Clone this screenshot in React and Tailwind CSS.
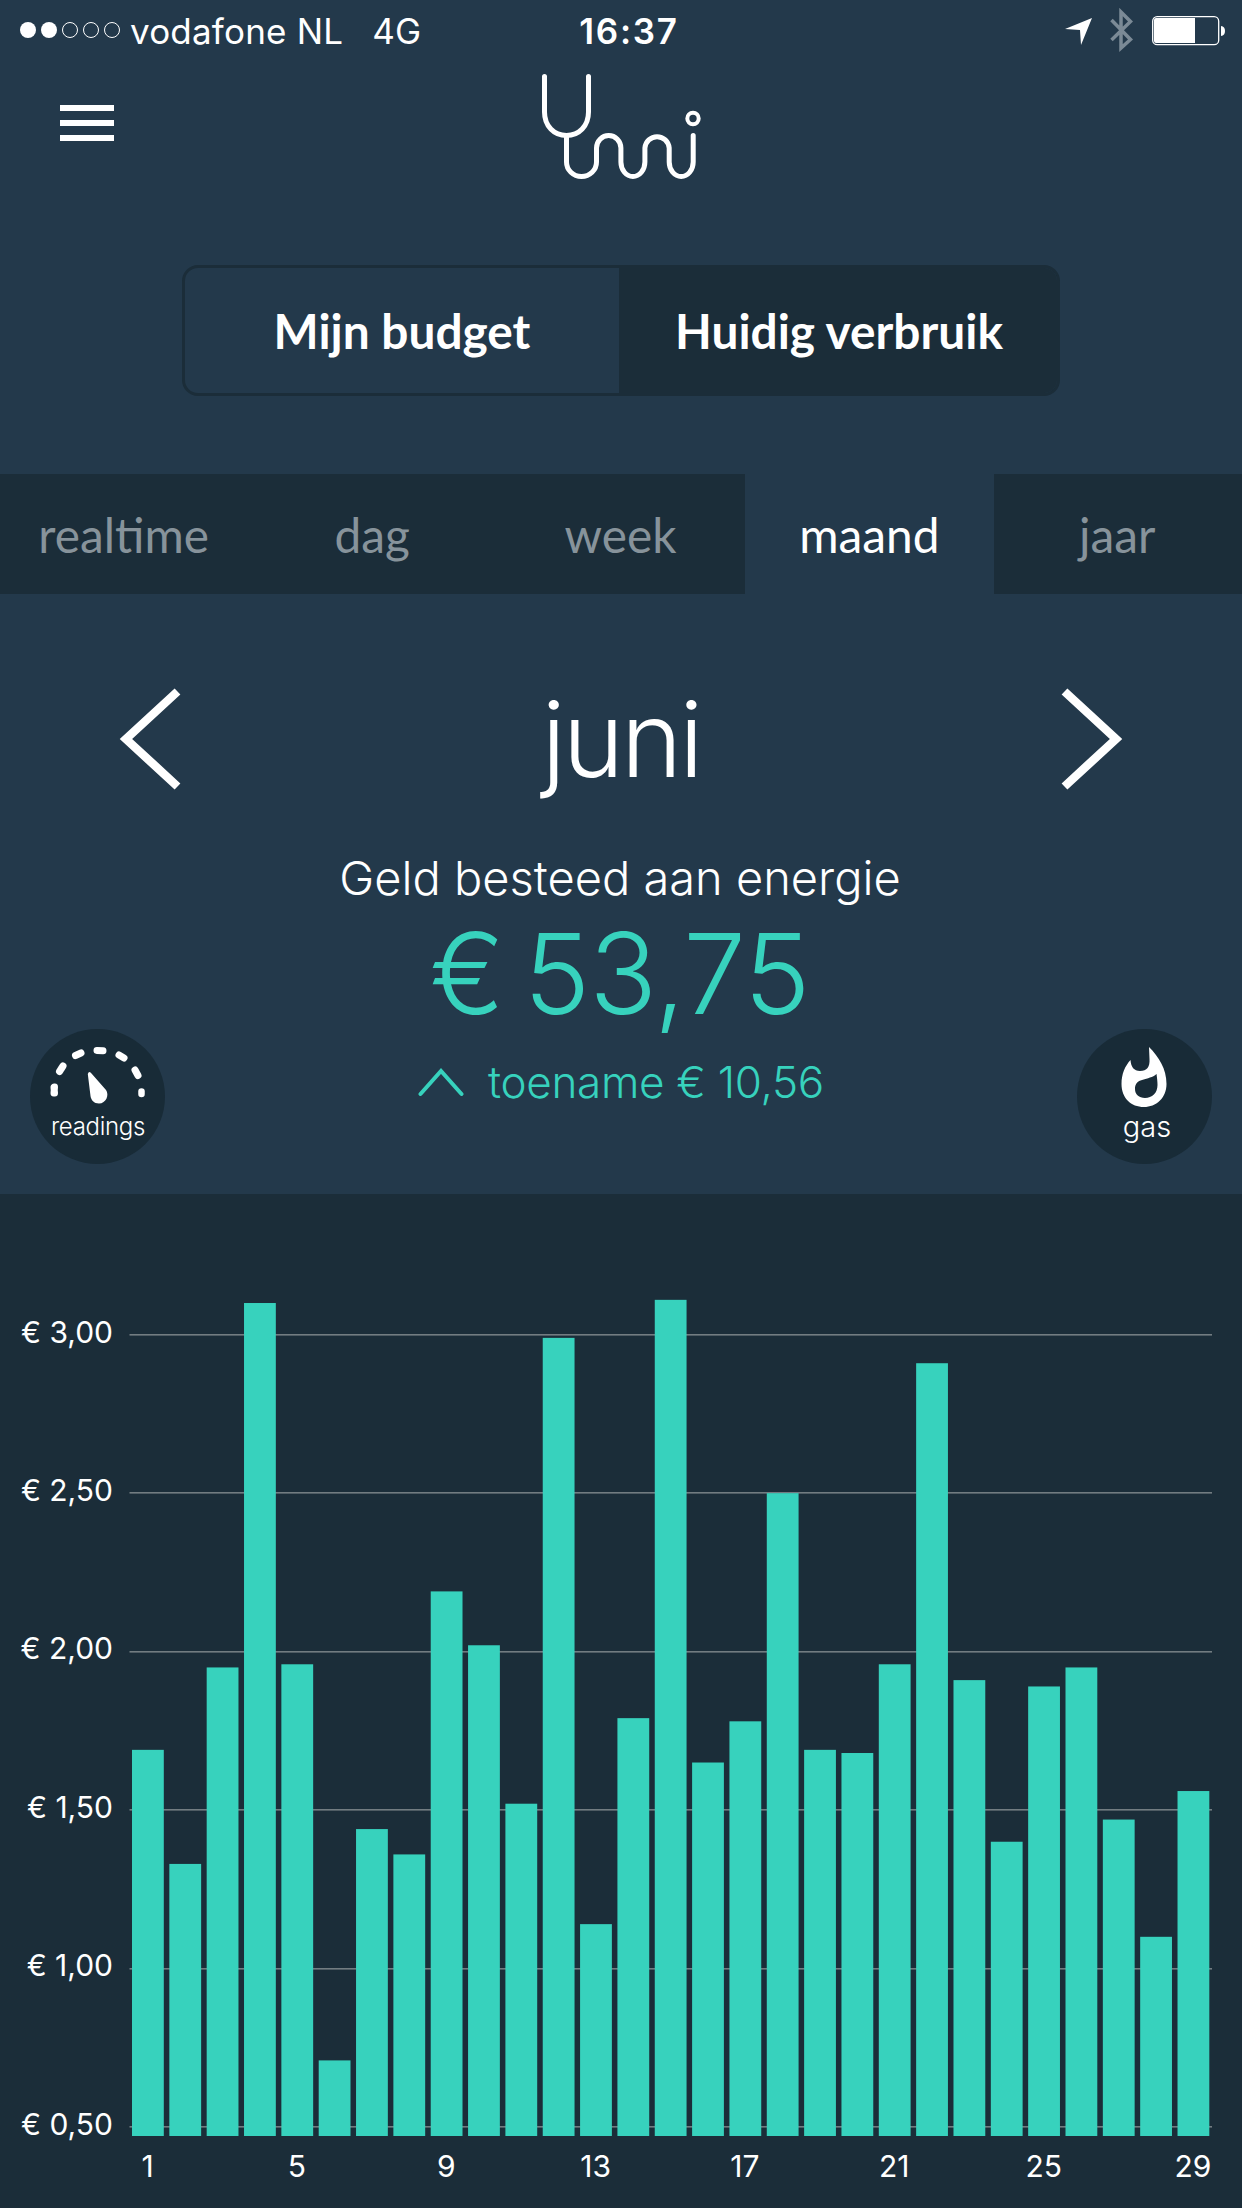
const periods = ['realtime', 'dag', 'week', 'maand', 'jaar'];

const usage = [
  1.69, 1.33, 1.95, 3.1, 1.96, 0.71, 1.44, 1.36, 2.19, 2.02, 1.52, 2.99, 1.14, 1.79, 3.11,
  1.65, 1.78, 2.5, 1.69, 1.68, 1.96, 2.91, 1.91, 1.4, 1.89, 1.95, 1.47, 1.1, 1.56,
];

const ticks = [3, 2.5, 2, 1.5, 1, 0.5];

const StatusBar = () => (
  <div className="grid h-[60px] grid-cols-3 items-center pl-[19px] pr-[17px] font-['Inter'] text-[35px] leading-[58px]">
    <div className="flex items-center">
      <svg width="104" height="20" viewBox="0 0 104 20" className="mr-[7px] shrink-0">
        {[9, 30, 51, 72, 93].map((cx, i) => (
          <circle
            key={cx}
            cx={cx}
            cy="10"
            r={i < 2 ? 8 : 7.5}
            fill={i < 2 ? 'white' : 'none'}
            stroke="white"
            strokeWidth={i < 2 ? 0 : 1}
          />
        ))}
      </svg>
      <span className="whitespace-nowrap pt-[2px] tracking-[0.2px]">vodafone NL</span>
      <span className="ml-[29px] pt-[2px]">4G</span>
    </div>
    <div className="pl-[14px] pt-[2px] text-center font-semibold tracking-[1.7px]">16:37</div>
    <div className="flex items-center justify-end">
      <svg width="160" height="44" viewBox="0 0 160 44">
        <path d="M0 21 L27 10 L16 37 L15 22 Z" fill="white" />
        <path
          d="M46.500 12 L65.500 31.500 L56 40 V4 L65.500 13.500 L46.500 32"
          fill="none"
          stroke="#7b8a96"
          strokeWidth="3.500"
        />
        <rect x="87.700" y="8.700" width="66" height="28" rx="4.500" fill="none" stroke="white" strokeWidth="1.300" />
        <path d="M91 10 H130 V35 H91 Q89 35 89 33 V12 Q89 10 91 10 Z" fill="white" />
        <path d="M156 18 Q160 18.500 160 23 Q160 27.500 156 28 Z" fill="white" />
      </svg>
    </div>
  </div>
);

const Logo = () => (
  <svg width="162" height="112" viewBox="0 0 162 112" fill="none" stroke="white" strokeWidth="5" strokeLinecap="round">
    <path d="M4.500 6.500 V42 C4.500 56 14 65.500 26.500 65.500 C39 65.500 48.500 56 48.500 42 V6.500" />
    <path d="M26.500 65.500 V92 A15 14.500 0 0 0 56.500 92 V78 A12.200 12.500 0 0 1 80.900 78 V92 A12 14.500 0 0 0 104.900 92 V78 A12.200 12.500 0 0 1 129.200 78 V92 A12 14.500 0 0 0 153.200 92 V65.500" />
    <circle cx="153" cy="48.500" r="5.700" strokeWidth="4" />
  </svg>
);

const Header = () => (
  <div className="grid h-[205px] grid-cols-3 items-start px-[60px]">
    <button type="button" className="mt-[45px] flex w-[54px] flex-col gap-[9px]">
      <span className="h-[6px] bg-white" />
      <span className="h-[6px] bg-white" />
      <span className="h-[6px] bg-white" />
    </button>
    <div className="mt-[10px] flex justify-center">
      <Logo />
    </div>
  </div>
);

const ModeSwitch = () => (
  <div className="mx-auto flex h-[131px] w-[878px] overflow-hidden rounded-[16px] border-[3px] border-[#1b2d39] text-center text-[47.800px] font-bold leading-[126px]">
    <div className="w-[434px]">Mijn budget</div>
    <div className="flex-1 bg-[#1b2d39] pl-[2px]">Huidig verbruik</div>
  </div>
);

const PeriodTabs = ({ active }) => (
  <div className="mt-[78px] grid h-[120px] grid-cols-5 text-center text-[47.800px]">
    {periods.map((period) => (
      <div
        key={period}
        className={
          period === active
            ? 'h-[120px] leading-[122px] text-white'
            : 'h-[120px] bg-[#1b2d39] pr-[1px] leading-[122px] text-[#87939b]'
        }
      >
        {period}
      </div>
    ))}
  </div>
);

const MonthPicker = () => (
  <div className="mt-[80px] flex h-[130px] items-center justify-between px-[119px]">
    <svg width="62" height="102" viewBox="0 0 62 102" fill="none" stroke="white" strokeWidth="8.500">
      <path d="M58.500 3.500 L7 51 L58.500 98.500" />
    </svg>
    <span className="font-['Inter'] text-[104px] font-light leading-[130px] tracking-[-3px]">juni</span>
    <svg width="62" height="102" viewBox="0 0 62 102" fill="none" stroke="white" strokeWidth="8.500">
      <path d="M3.500 3.500 L55 51 L3.500 98.500" />
    </svg>
  </div>
);

const GaugeIcon = () => (
  <svg width="96" height="58" viewBox="0 0 96 58" fill="none" stroke="white" strokeWidth="7" strokeLinecap="round">
    <path d="M5 41.500 L5.500 47 M5.500 41 L5 47" />
    <path d="M10.500 25.500 L14 20" />
    <path d="M26.500 9.500 L32 7" />
    <path d="M48 4.500 L54 4.800" />
    <path d="M70 9 L75 12" />
    <path d="M86 24 L89 29.500" />
    <path d="M92.500 45.500 V48" strokeWidth="6.500" />
    <path
      d="M39.500 26.500 C40.500 25.500 41.500 26 42.500 27.500 L57 44 C60.500 49 57 57.500 50 57.500 C45 57.500 42 54 41.500 50 L38.800 28 Z"
      fill="white"
      stroke="none"
    />
  </svg>
);

const FlameIcon = () => (
  <svg width="46" height="60" viewBox="0 0 46 60">
    <path
      d="M28 0 C38 10 45.500 22 45.500 37 C45.500 51 35 60 23 60 C10 60 0.500 51 0.500 37 C0.500 27 4 19 9.500 13 C10 20 13 24 19 24 C26 24 29 20 28.500 12 Z M35.500 27 C28 34 14 30 14 42 C14 47.500 18 51 24 51 C31 51 36.500 46 36.500 38 C36.500 34 36 31 35.500 27 Z"
      fill="white"
      fillRule="evenodd"
    />
  </svg>
);

const Summary = () => (
  <div className="h-[390px] font-['Inter'] font-light">
    <div className="mt-[34px] h-[80px] pr-[2px] text-center text-[47px] leading-[80px]">Geld besteed aan energie</div>
    <div className="h-[111px] pr-[3px] text-center text-[112px] leading-[111px] tracking-[-0.800px] text-[#37d2bd] [word-spacing:-11px]">
      € 53,75
    </div>
    <div className="flex items-start justify-between px-[30px]">
      <div className="flex size-[135px] flex-col items-center rounded-full bg-[#182b37]">
        <div className="mt-[17px] pr-[1px]">
          <GaugeIcon />
        </div>
        <span className="mt-[10px] pl-[1px] text-[24px] leading-[26px] tracking-[-0.300px]">readings</span>
      </div>
      <div className="mt-[23px] flex items-center text-[44px] leading-[60px] tracking-[-0.300px] text-[#37d2bd]">
        <svg width="46" height="30" viewBox="0 0 46 30" className="mr-[24px]" fill="none" stroke="#37d2bd" strokeWidth="4" strokeLinecap="round">
          <path d="M2.500 27 L23 4 L43.500 27" />
        </svg>
        <span>toename € 10,56</span>
      </div>
      <div className="flex size-[135px] flex-col items-center rounded-full bg-[#182b37]">
        <div className="mt-[18px]">
          <FlameIcon />
        </div>
        <span className="mt-[4px] pl-[5px] text-[29px] leading-[32px]">gas</span>
      </div>
    </div>
  </div>
);

const CHART_TOP = 140.7;
const EURO = 316.9;
const BASE = 942;

const yFor = (value) => CHART_TOP + (3 - value) * EURO;

const UsageChart = () => (
  <svg width="1242" height="1014" viewBox="0 0 1242 1014" className="block bg-[#1b2d39] font-['Inter'] text-[30px]" fill="white">
    {ticks.map((tick) => (
      <g key={tick}>
        <rect x="129.500" y={Math.round(yFor(tick)) - 1} width="1082.500" height="1.600" fill="#727c81" />
        <text x="113" y={yFor(tick) + 7.8} textAnchor="end">
          € {tick.toFixed(2).replace('.', ',')}
        </text>
      </g>
    ))}
    {usage.map((value, i) => (
      <rect key={i} x={132 + i * 37.34} y={yFor(value)} width="31.800" height={BASE - yFor(value)} fill="#37d2bd" />
    ))}
    {usage.map(
      (_, i) =>
        i % 4 === 0 && (
          <text key={i} x={147.5 + i * 37.34} y="983" textAnchor="middle">
            {i + 1}
          </text>
        )
    )}
  </svg>
);

export default function App() {
  return (
    <div className="flex h-[2208px] w-[1242px] flex-col overflow-hidden bg-[#23394b] font-['Lato',sans-serif] text-white">
      <StatusBar />
      <Header />
      <ModeSwitch />
      <PeriodTabs active="maand" />
      <MonthPicker />
      <Summary />
      <UsageChart />
    </div>
  );
}
